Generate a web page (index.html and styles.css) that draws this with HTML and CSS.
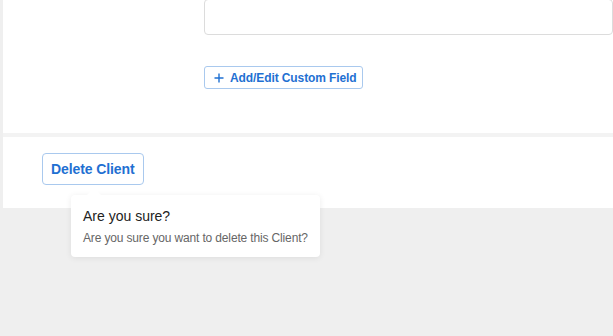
FILE: index.html
```html
<!DOCTYPE html>
<html lang="en">
<head>
    <meta charset="UTF-8">
    <title>Client</title>
    <link rel="stylesheet" href="styles.css">
</head>
<body>
    <div class="page">
        <div class="card fields">
            <div class="field-row">
                <textarea class="notes"></textarea>
            </div>
            <div class="field-row">
                <button class="custom-button">
                    <svg width="10" height="10" viewBox="0 0 10 10"><path d="M5 0.5v9M0.5 5h9" stroke="#1f70d2" stroke-width="1.4" fill="none"/></svg>
                    Add/Edit Custom Field
                </button>
            </div>
        </div>
        <div class="card actions">
            <div class="delete-wrap">
                <button class="delete-button">Delete Client</button>
                <div class="popover">
                    <h4>Are you sure?</h4>
                    <p>Are you sure you want to delete this Client?</p>
                </div>
            </div>
        </div>
    </div>
</body>
</html>
```

FILE: styles.css
```css
body {
    margin: 0;
    font-family: "Liberation Sans", Arial, sans-serif;
    background-color: #efefef;
    height: 336px;
    overflow: hidden;
}
.page {
    padding-left: 3px;
}
.card {
    background-color: #fff;
}
.fields {
    box-sizing: border-box;
    padding-left: 201px;
    border-bottom: 4px solid #f3f3f3;
    height: 137px;
}
.field-row {
    display: flex;
}
.notes {
    display: block;
    width: 420px;
    height: 36px;
    margin: -1px 0 0 0;
    box-sizing: border-box;
    border: 1px solid #dcdcdc;
    border-radius: 4px;
    resize: none;
}
.custom-button {
    margin-top: 31px;
    display: flex;
    align-items: center;
    gap: 6px;
    height: 23px;
    padding: 0 5px 0 9px;
    background-color: #fff;
    border: 1px solid #a9c9ee;
    border-radius: 3px;
    color: #1f70d2;
    font-family: "Liberation Sans", Arial, sans-serif;
    font-size: 12px;
    font-weight: bold;
    letter-spacing: -0.1px;
}
.actions {
    height: 71px;
    padding-left: 39px;
    padding-top: 16px;
    box-sizing: border-box;
}
.delete-wrap {
    position: relative;
    display: inline-block;
}
.delete-button {
    height: 32px;
    padding: 0 8px;
    background-color: #fff;
    border: 1px solid #a9c9ee;
    border-radius: 4px;
    color: #1f70d2;
    font-family: "Liberation Sans", Arial, sans-serif;
    font-size: 14px;
    font-weight: bold;
    letter-spacing: -0.1px;
}
.popover {
    position: absolute;
    left: 29px;
    top: 42px;
    width: 249px;
    height: 62px;
    box-sizing: border-box;
    padding: 13px 12px;
    background-color: #fff;
    border-radius: 4px;
    box-shadow: 0 1px 6px rgba(0, 0, 0, 0.08);
    white-space: nowrap;
}
.popover::before {
    content: "";
    position: absolute;
    left: 16px;
    top: -7px;
    border-left: 7px solid transparent;
    border-right: 7px solid transparent;
    border-bottom: 7px solid #fff;
}
.popover h4 {
    margin: 0;
    font-size: 14px;
    font-weight: normal;
    color: #222;
}
.popover p {
    margin: 7px 0 0;
    font-size: 12px;
    color: #666;
    letter-spacing: -0.15px;
}
```
